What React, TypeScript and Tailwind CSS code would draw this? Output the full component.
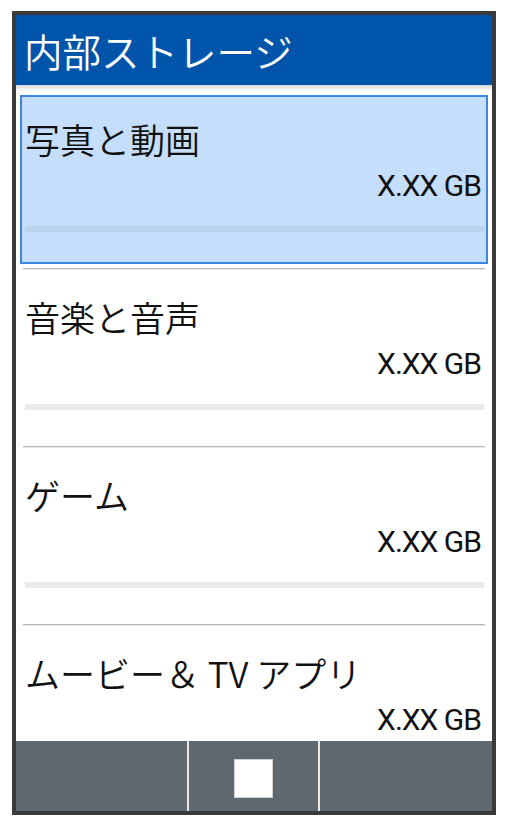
import React from "react";

const items = [
  { title: "写真と動画", size: "X.XX GB", selected: true },
  { title: "音楽と音声", size: "X.XX GB", selected: false },
  { title: "ゲーム", size: "X.XX GB", selected: false },
  { title: "ムービー＆ TV アプリ", size: "X.XX GB", selected: false },
];

const cjk = { fontFamily: '"Noto Sans CJK JP", "Noto Sans", sans-serif' };
const roboto = { fontFamily: 'Roboto, "Liberation Sans", sans-serif' };

function Item({ title, size, selected }: { title: string; size: string; selected: boolean }) {
  return (
    <div>
      <div className="h-[177px] p-[4px]">
        <div
          className={
            selected
              ? "h-full flex flex-col border-2 border-[#3d87e0] bg-[#c5defb]"
              : "h-full flex flex-col border-2 border-transparent"
          }
        >
          <div className="pt-[24px] pl-[3px] text-[35px] leading-[35px] font-[350] text-[#111] whitespace-nowrap" style={cjk}>
            {title}
          </div>
          <div
            className="mt-[15px] pr-[5px] text-right text-[30px] leading-[30px] tracking-[-1px] text-[#111]"
            style={roboto}
          >
            {size}
          </div>
          <div className={selected ? "mt-[25px] ml-[3px] mr-[2px] h-[6px] bg-[#bcd3ec]" : "mt-[25px] ml-[3px] mr-[2px] h-[6px] bg-[#ebebeb]"} />
        </div>
      </div>
      <div className="mx-[7px] h-px bg-[#b9b9b9] shadow-[0_1px_0_#e6e6e6]" />
    </div>
  );
}

export default function App() {
  return (
    <div className="w-[507px] h-[826px] bg-white pt-[11px] pl-[12px]">
      <div className="w-[484px] h-[804px] border-4 border-[#3a3a3a] flex flex-col overflow-hidden bg-white">
        <div className="h-[70px] shrink-0 bg-[#0055aa] flex items-center pl-[8px]">
          <span className="text-[38.5px] leading-[38px] font-[350] text-white whitespace-nowrap" style={cjk}>
            内部ストレージ
          </span>
        </div>
        <div className="h-[6px] shrink-0 bg-gradient-to-b from-[#d6d6d6] to-white" />
        <div className="flex-1 min-h-0 overflow-hidden">
          {items.map((it, i) => (
            <Item key={i} {...it} />
          ))}
        </div>
        <div className="h-[70px] shrink-0 bg-[#5f686e] flex">
          <div className="w-[171px]" />
          <div className="w-[2px] bg-[#e8e8e8]" />
          <div className="w-[129px] flex justify-center pt-[18px]">
            <div className="w-[39px] h-[39px] bg-white border border-[#d0d0d0]" />
          </div>
          <div className="w-[2px] bg-[#e8e8e8]" />
          <div className="flex-1" />
        </div>
      </div>
    </div>
  );
}
